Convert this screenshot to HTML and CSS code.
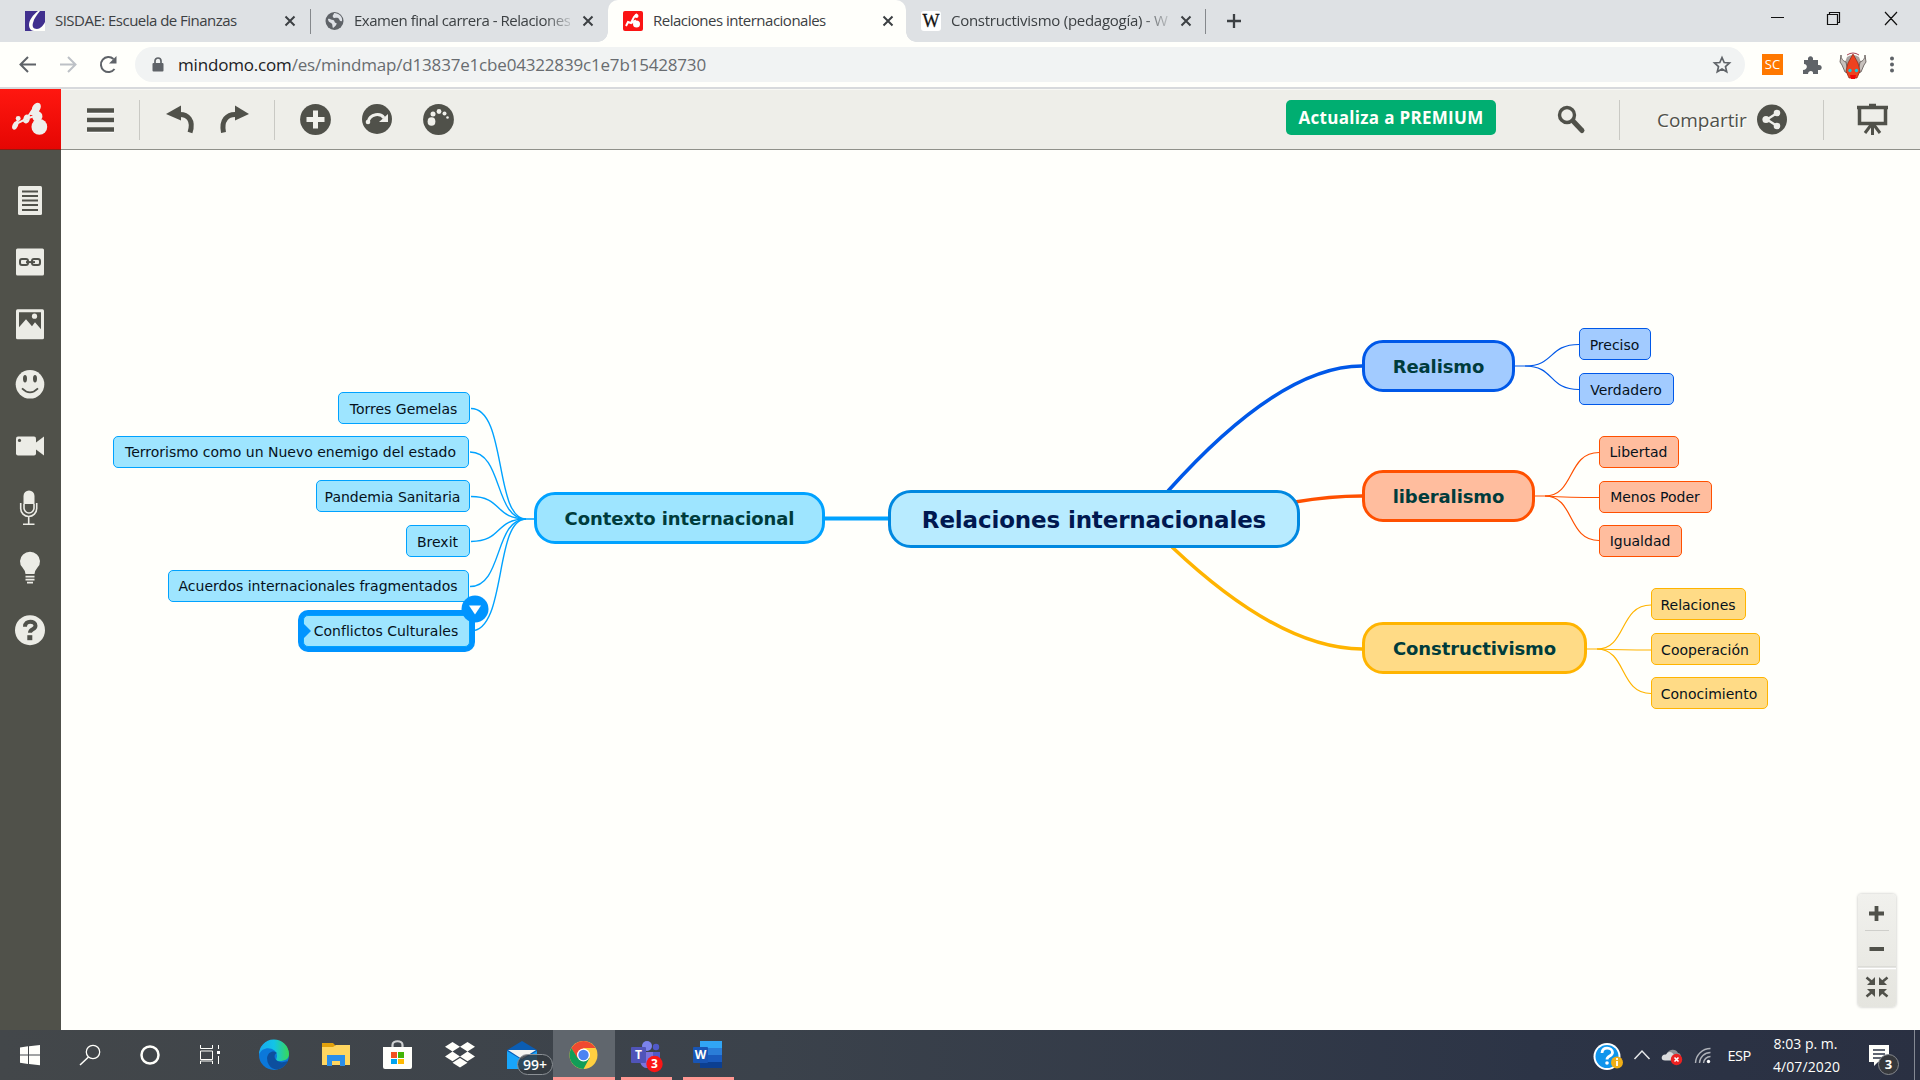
FILE: index.html
```html
<!DOCTYPE html>
<html lang="es">
<head>
<meta charset="utf-8">
<title>Relaciones internacionales</title>
<link rel="stylesheet" href="styles.css">
</head>
<body>
<header class="tabs">
  <div class="tab tab-1">
    <svg class="fav" viewBox="0 0 20 20"><rect width="20" height="20" fill="#41308f"/><path d="M13 0C8 4 4 9 4 14c0 3 2 6 5 6h11v-9c-2 4-5 7-8 7-4 0-5-3-4-6 1-5 4-8 7-12z" fill="#fffffb"/></svg>
    <span class="tab-title t1">SISDAE: Escuela de Finanzas</span>
    <svg class="x" viewBox="0 0 12 12"><path d="M1.5 1.5l9 9M10.500 1.5l-9 9"/></svg>
  </div>
  <div class="tab tab-2">
    <svg class="fav" viewBox="0 0 20 20"><circle cx="9.500" cy="10" r="9" fill="#5f6368"/><path d="M3 8c2-1 3 1 5 1s1 3 3 3-1 4-3 5c-1-2 0-4-2-5s-3-2-3-4zM9 2c0 2-2 2-1 4s3 0 5 1 1 4 4 3c1-4-3-8-8-8z" fill="#dee1e6"/></svg>
    <span class="tab-title t2 fade">Examen final carrera - Relaciones</span>
    <svg class="x" viewBox="0 0 12 12"><path d="M1.500 1.500l9 9M10.500 1.500l-9 9"/></svg>
  </div>
  <div class="tab tab-3 active">
    <svg class="fav" viewBox="0 0 20 20"><rect width="20" height="20" rx="2" fill="#fb1414"/><path d="M3 15l2-4 3 1 3-6 3-3M8 12l4-2 1 3" stroke="#fff" stroke-width="2" fill="none"/><circle cx="13.500" cy="13" r="3.500" fill="#fff"/><circle cx="13.500" cy="5" r="2" fill="#fff"/></svg>
    <span class="tab-title t3">Relaciones internacionales</span>
    <svg class="x" viewBox="0 0 12 12"><path d="M1.500 1.500l9 9M10.500 1.500l-9 9"/></svg>
  </div>
  <div class="tab tab-4">
    <span class="fav wiki">W</span>
    <span class="tab-title t4 fade">Constructivismo (pedagogía) - W</span>
    <svg class="x" viewBox="0 0 12 12"><path d="M1.500 1.500l9 9M10.500 1.500l-9 9"/></svg>
  </div>
  <svg class="newtab" viewBox="0 0 16 16"><path d="M8 1v14M1 8h14" stroke="#3c4043" stroke-width="2.300"/></svg>
  <svg class="winctl" viewBox="1760 0 160 42" fill="none" stroke="#111" stroke-width="1.200"><path d="M1771 17.500h13M1827.500 14.500h10v10h-10zM1829.500 14v-1.500h10v10h-2M1885 12l12 13M1897 12l-12 13"/></svg>
</header>

<nav class="address">
  <svg class="nav-icons" viewBox="0 42 135 45" fill="none" stroke="#5f6368" stroke-width="2"><path d="M36 64.500H21M28 57l-7.500 7.500 7.500 7.500"/><path d="M60 64.500h15M68 57l7.500 7.500-7.500 7.500" stroke="#bdc1c6"/><path d="M114.500 69A7.500 7.500 0 1 1 113.500 59"/><path d="M116.500 56v7.500h-7.500z" fill="#5f6368" stroke="none"/></svg>
  <div class="omni">
    <svg class="lock" viewBox="0 0 12 16"><path d="M3 6.500V4a3 3 0 0 1 6 0v2.500" fill="none" stroke="#5f6368" stroke-width="1.700"/><rect x=".5" y="6" width="11" height="8.500" rx="1" fill="#5f6368"/></svg>
    <span class="url"><b>mindomo.com</b>/es/mindmap/d13837e1cbe04322839c1e7b15428730</span>
    <svg class="star" viewBox="0 0 20 20"><path d="M10 2.500l2.200 5 5.300.5-4 3.600 1.200 5.200L10 14l-4.700 2.800 1.200-5.200-4-3.600 5.300-.5z" fill="none" stroke="#5f6368" stroke-width="1.700"/></svg>
  </div>
  <span class="sc">SC</span>
  <svg class="ext" viewBox="1795 42 125 45"><path d="M1804 60h4c-1-5 6-5 5 0h5v5c5-1 5 6 0 5v4h-5c1-4-5-4-5 0h-5v-4c5 0 5-6 1-6z" fill="#5f6368"/>
    <path d="M1847 57q6-4 12 0l3 8-3 9-6 5-6-5-3-9z" fill="#a9a29f"/><path d="M1841 55c0 4 2 6 5 7l2 11-3-1-3-7-2-3zM1865 55c0 4-2 6-5 7l-2 11 3-1 3-7 2-3z" fill="#c7c1bd" stroke="#59514e" stroke-width=".8"/><path d="M1853 54l5 9 2 8-3 7h-8l-3-7 2-8z" fill="#ee421f" stroke="#8a2718" stroke-width=".7"/><path d="M1847 55q6-4 12 0" fill="none" stroke="#a45" stroke-width="1"/><circle cx="1850" cy="70.500" r="1.700" fill="#16c7dc"/><circle cx="1856.500" cy="70.500" r="1.700" fill="#16c7dc"/><path d="M1850 75h6l-1 4h-4z" fill="#f00808"/>
    <g fill="#5f6368"><circle cx="1892" cy="58.500" r="2"/><circle cx="1892" cy="64.500" r="2"/><circle cx="1892" cy="70.500" r="2"/></g></svg>
</nav>

<section class="appbar">
  <svg class="logo" viewBox="0 89 61 61"><g fill="#efefec"><circle cx="39.500" cy="127.500" r="8"/><path d="M29 115l6-9 5 2-2 9z"/><ellipse cx="36.500" cy="108" rx="4" ry="5.500" transform="rotate(35 36.500 108)"/><ellipse cx="37.500" cy="117" rx="5" ry="5.500" transform="rotate(25 37.500 117)"/><ellipse cx="26.500" cy="119.500" rx="3.300" ry="4.500" transform="rotate(20 26.500 119.500)"/><ellipse cx="15" cy="126" rx="2.700" ry="4.500" transform="rotate(25 15 126)"/><circle cx="18" cy="119" r="2.500"/></g><path d="M15 125l4-6M17 124l10-5 9-3M28 117l6-9" stroke="#efefec" stroke-width="2"/></svg>
  <svg class="tools" viewBox="61 89 400 60">
    <path d="M87 111.500h27M87 121h27M87 130.500h27" stroke="#fff" stroke-width="4.600"/>
    <path d="M87 110.500h27M87 120h27M87 129.500h27" stroke="#50514a" stroke-width="4.600"/>
    <path d="M139.500 100v40M274.500 100v40" stroke="#c9c9c4"/>
    <path d="M178 114.500c10-1 16 6 12 18" fill="none" stroke="#50514a" stroke-width="5"/><path d="M166 114l15-8.500v15z" fill="#50514a"/>
    <path d="M237 114.500c-10-1-16 6-13.500 18" fill="none" stroke="#50514a" stroke-width="5"/><path d="M249 114l-14-8.500v15z" fill="#50514a"/>
    <circle cx="315.500" cy="119.500" r="15.400" fill="#50514a"/><path d="M315.500 110.500v18M306.500 119.500h18" stroke="#f0f0eb" stroke-width="5"/>
    <circle cx="377" cy="119" r="15" fill="#50514a"/><path d="M368 122c2-9 13-9 16-4" fill="none" stroke="#f0f0eb" stroke-width="3"/><path d="M388 114v8h-9z" fill="#f0f0eb"/><circle cx="368" cy="122" r="2.300" fill="#f0f0eb"/>
    <circle cx="438.500" cy="119.500" r="15.400" fill="#50514a"/><g fill="#f0f0eb"><ellipse cx="431.500" cy="121.500" rx="3.900" ry="4.300"/><circle cx="433" cy="114" r="2.500"/><circle cx="439" cy="111.500" r="2.400"/><circle cx="444.500" cy="113.500" r="2"/><circle cx="447.500" cy="117.500" r="1.300"/></g>
  </svg>
  <button class="premium"><span>Actualiza a PREMIUM</span></button>
  <svg class="search" viewBox="1530 89 100 60"><circle cx="1567" cy="115" r="7.500" fill="none" stroke="#50514a" stroke-width="3.400"/><path d="M1573 121l9 9.500" stroke="#50514a" stroke-width="5" stroke-linecap="round"/><path d="M1619.500 100v40" stroke="#c9c9c4"/></svg>
  <span class="share">Compartir</span>
  <svg class="right-tools" viewBox="1750 89 170 60"><circle cx="1772" cy="119.500" r="15" fill="#50514a"/><path d="M1777 113l-10 6.500 10 6.500" fill="none" stroke="#f0f0eb" stroke-width="2.300"/><g fill="#f0f0eb"><circle cx="1777" cy="113" r="3.300"/><circle cx="1766" cy="119.500" r="3.600"/><circle cx="1777" cy="126" r="3.300"/></g><path d="M1823.500 100v40" stroke="#c9c9c4"/><path d="M1857 107.500h31M1869 105.500h7" stroke="#50514a" stroke-width="3.500"/><path d="M1859.500 107v16.500h26V107" fill="none" stroke="#50514a" stroke-width="3.500"/><path d="M1872.500 124v11M1871 125l-6 8M1874 125l6 8" stroke="#50514a" stroke-width="3"/></svg>
</section>

<main class="work">
  <aside class="side">
    <svg viewBox="0 170 61 61.400"><rect x="18" y="186" width="24" height="29" rx="1.500"/><path d="M22 191.500h16M22 196h16M22 200.500h16M22 205h16M22 210h16" class="cut" stroke-width="2"/></svg>
    <svg viewBox="0 231.400 61 61.400"><rect x="16" y="249" width="28" height="27" rx="1.500"/><rect x="20" y="259.500" width="8" height="6" rx="2" class="cut" stroke-width="2"/><rect x="32" y="259.500" width="8" height="6" rx="2" class="cut" stroke-width="2"/><path d="M26 262.500h9" class="cut" stroke-width="2"/></svg>
    <svg viewBox="0 292.800 61 61.400"><rect x="16" y="309" width="28" height="30" rx="1.500"/><path d="M19 312h22v17l-6-7-3 4-6-7-7 8z" fill="#50514a"/><circle cx="34.500" cy="316" r="2.600"/></svg>
    <svg viewBox="0 354.200 61 61.400"><circle cx="30" cy="384.500" r="14.300"/><ellipse cx="25" cy="379" rx="2" ry="3.700" fill="#50514a"/><ellipse cx="35" cy="379" rx="2" ry="3.700" fill="#50514a"/><path d="M22 388.500q8 8 16 0" class="cut" stroke-width="1.700"/></svg>
    <svg viewBox="0 415.600 61 61.400"><rect x="16" y="436" width="20" height="19" rx="2"/><path d="M36 442l8-6v19l-8-6z"/><circle cx="19.500" cy="440" r="1.600" fill="#50514a"/></svg>
    <svg viewBox="0 477 61 61.400"><path d="M23.500 504v-8a5.500 5.500 0 0 1 11 0v8z"/><path d="M24 504v4a5 5 0 0 0 10 0v-4M20.700 503v5.500a8 8 0 0 0 16 0V503M28.700 517v6.500M23 524.300h11.500" fill="none" stroke="#ececE6" stroke-width="1.600"/></svg>
    <svg viewBox="0 538.400 61 61.400"><path d="M25.500 574.500q0-3-3-6.500A10 9.500 0 1 1 37.500 568q-3 3.500-3 6.500z"/><path d="M25.500 577h9M25.500 580h9M27 583h6" stroke="#ecece6" stroke-width="1.700"/></svg>
    <svg viewBox="0 599.800 61 61.400"><circle cx="30" cy="630" r="15"/><path d="M25 626.500c0-7 10.500-6 10.500-1 0 4-5.500 3-5.500 7" class="cut" stroke-width="4"/><rect x="27.300" y="635" width="5" height="5" fill="#50514a"/></svg>
  </aside>
  <div class="canvas">
    <svg class="links" viewBox="61 150 1859 880" fill="none">
      <g stroke="#00a2ff" stroke-width="1.400"><path d="M534 519h-8C494 519 507 408.500 471 408.500"/><path d="M526 519C494 519 503 452 470 452"/><path d="M526 519C494 519 503 496.500 471 496.500"/><path d="M526 519C494 519 503 541.500 471 541.500"/><path d="M526 519C494 519 503 586.500 470 586.500"/><path d="M526 519C494 519 507 631 471 631"/></g>
      <path d="M825 518.500h64" stroke="#00a2ff" stroke-width="4"/>
      <path d="M1168 491Q1280 366 1362 366" stroke="#0058e8" stroke-width="3.500"/>
      <path d="M1295 502Q1330 496 1362 496" stroke="#ff5000" stroke-width="3.500"/>
      <path d="M1172 547Q1280 649 1362 649" stroke="#ffb400" stroke-width="3.500"/>
      <g stroke="#0058e8" stroke-width="1.200"><path d="M1515 366h10C1555 366 1548 344.500 1579 344.500"/><path d="M1525 366C1555 366 1548 389.500 1579 389.500"/></g>
      <g stroke="#ff5000" stroke-width="1.200"><path d="M1535 496h10C1575 496 1567 452.500 1599 452.500"/><path d="M1545 496q25 1.500 54 1.500"/><path d="M1545 496C1575 496 1567 540.500 1599 540.500"/></g>
      <g stroke="#ffb400" stroke-width="1.200"><path d="M1587 649h10C1627 649 1619 605 1651 605"/><path d="M1597 649q25 1 54 1"/><path d="M1597 649C1627 649 1619 693.500 1651 693.500"/></g>
    </svg>
    <div class="node root">Relaciones internacionales</div>
    <div class="node topic cyan contexto">Contexto internacional</div>
    <div class="node leaf cyan torres">Torres Gemelas</div>
    <div class="node leaf cyan terrorismo">Terrorismo como un Nuevo enemigo del estado</div>
    <div class="node leaf cyan pandemia">Pandemia Sanitaria</div>
    <div class="node leaf cyan brexit">Brexit</div>
    <div class="node leaf cyan acuerdos">Acuerdos internacionales fragmentados</div>
    <div class="node leaf cyan conflictos">Conflictos Culturales</div>
    <svg class="handle" viewBox="0 0 28 28"><circle cx="14" cy="14" r="13.500" fill="#0094ff"/><path d="M8 10.500h12l-6 9z" fill="#fff"/></svg>
    <div class="node topic blue realismo">Realismo</div>
    <div class="node leaf blue preciso">Preciso</div>
    <div class="node leaf blue verdadero">Verdadero</div>
    <div class="node topic orange liberalismo">liberalismo</div>
    <div class="node leaf orange libertad">Libertad</div>
    <div class="node leaf orange menos">Menos Poder</div>
    <div class="node leaf orange igualdad">Igualdad</div>
    <div class="node topic yellow constructivismo">Constructivismo</div>
    <div class="node leaf yellow relaciones">Relaciones</div>
    <div class="node leaf yellow cooperacion">Cooperación</div>
    <div class="node leaf yellow conocimiento">Conocimiento</div>
    <svg class="zoom" viewBox="1858 894 38 113"><path d="M1876.500 906v15M1869 913.500h15M1869.500 949h14.500" stroke="#50514a" stroke-width="3.800"/><path d="M1865 930.500h24M1858 967h38" stroke="#cfcfcb"/><path d="M1858 968.500h38" stroke="#fff" stroke-width="1.500"/><g stroke="#50514a" stroke-width="2.500"><path d="M1866.500 977.500l6 5M1887.500 977.500l-6 5M1866.500 996.500l6-5M1887.500 996.500l-6-5"/></g><g fill="#50514a"><path d="M1875 977v8h-8zM1879 977v8h8zM1875 997v-8h-8zM1879 997v-8h8z"/></g></svg>
  </div>
</main>

<footer class="taskbar">
  <svg class="sys" viewBox="0 1030 243 50" fill="none" stroke="#fffffb"><path d="M20 1047.500l8-1.200v8.200h-8zM29 1046.200l11-1.200v9.500H29zM20 1055.500h8v8.500l-8-1.200zM29 1055.500h11v9.700l-11-1.200z" fill="#fffffb" stroke="none"/><circle cx="93" cy="1052" r="6.700" stroke-width="1.300"/><path d="M88.500 1057l-8.500 8" stroke-width="1.500"/><circle cx="150" cy="1055" r="8.500" stroke-width="2.500"/><path d="M200.500 1045v3.500h12V1045M200.500 1051h12v8.500h-12zM200.500 1064v-3h12v3M218.500 1045v4M218.500 1056v8"/><rect x="217" y="1051" width="3" height="3" fill="#fff" stroke="none"/></svg>
  <svg viewBox="243 1030 62 50"><defs><linearGradient id="edge" x1="0" x2="1"><stop offset="0" stop-color="#1aa9ed"/><stop offset=".5" stop-color="#12c4e8"/><stop offset="1" stop-color="#39d955"/></linearGradient></defs><circle cx="274" cy="1055" r="15" fill="#0b78da"/><path d="M259 1055a15 15 0 0 1 30-1c0 5-4 7-9 7-6 0-3-2-3-5 0-9-15-11-18-1z" fill="url(#edge)"/><path d="M267 1058c1-7 7-8 10-5-4 1-3 8 3 9 4 1 6-1 8-1-4 8-14 12-19 4q-2-3-2-7z" fill="#0d4f9e"/></svg>
  <svg viewBox="305 1030 62 50"><path d="M322 1043h11l3 3h14v19h-28z" fill="#e2a10c"/><path d="M322 1047h11l3-2h14v20h-28z" fill="#ffd660"/><path d="M327 1066v-11h18v11h-5v-5h-8v5z" fill="#2a8eea"/></svg>
  <svg viewBox="367 1030 62 50"><path d="M392.500 1047v-2c0-5 10-5 10 0v2" fill="none" stroke="#cfd1d2" stroke-width="2.200"/><path d="M383 1047h29v20q0 2-2 2h-25q-2 0-2-2z" fill="#fffffb"/><path d="M391 1052h6v6h-6z" fill="#f25022"/><path d="M398 1052h6v6h-6z" fill="#43b406"/><path d="M391 1059h6v5h-6z" fill="#00a4ef"/><path d="M398 1059h6v5h-6z" fill="#ffb900"/></svg>
  <svg viewBox="429 1030 62 50" fill="#fffffb"><path d="M452.500 1042l7.500 4.800-7.500 4.800-7.500-4.800zM467.500 1042l7.500 4.800-7.500 4.800-7.500-4.800zM452.500 1051.600l7.500 4.800-7.500 4.800-7.500-4.800zM467.500 1051.600l7.500 4.800-7.500 4.800-7.500-4.800zM460 1058l7.500 4.700-7.500 4.800-7.500-4.800z"/></svg>
  <div class="slot">
    <svg viewBox="491 1030 62 50"><path d="M507 1050l15-9 15 9v19h-30z" fill="#0b5db3"/><path d="M508 1050h28l-14 9z" fill="#f5f5f0"/><path d="M507 1051l15 9 15-9v18h-30z" fill="#18a5fa"/></svg>
    <span class="mail-badge">99+</span>
  </div>
  <div class="slot chrome">
    <svg viewBox="553 1030 62 50"><circle cx="583.500" cy="1055" r="14" fill="#ffcf40"/><path d="M571.400 1048a14 14 0 0 1 24.200 0h-12.100l-6 11z" fill="#f04a30"/><path d="M571.400 1048a14 14 0 0 0 12.100 21l6-11-12 0z" fill="#129d58"/><circle cx="583.500" cy="1055" r="6.500" fill="#fff"/><circle cx="583.500" cy="1055" r="5.200" fill="#4a84f3"/></svg>
  </div>
  <div class="slot run">
    <svg viewBox="615 1030 62 50"><circle cx="647" cy="1046" r="5" fill="#7b83eb"/><circle cx="656" cy="1047" r="3.200" fill="#5059c9"/><path d="M651 1052h9v8q-4 6-9 2z" fill="#5059c9"/><path d="M640 1052h13v10q-1 6-6 6t-7-6z" fill="#7b73dd"/><rect x="631" y="1047" width="15" height="16" rx="1" fill="#5054b8"/><circle cx="654.500" cy="1064" r="8.200" fill="#fb1616"/></svg>
    <span class="t-letter">T</span><span class="t-badge">3</span>
  </div>
  <div class="slot run">
    <svg viewBox="677 1030 62 50"><path d="M700 1041h22v7h-22z" fill="#31a5f4"/><path d="M700 1048h22v7h-22z" fill="#2a7dd8"/><path d="M700 1055h22v7h-22z" fill="#195abd"/><path d="M700 1062h22v6h-22z" fill="#0c3f91"/><rect x="693" y="1047" width="15" height="16" rx="1" fill="#1855b5"/></svg>
    <span class="w-letter">W</span>
  </div>
  <div class="tray">
    <svg class="tray-icons" viewBox="1590 1030 130 50"><circle cx="1607" cy="1056.500" r="13.500" fill="#fff"/><circle cx="1607" cy="1056.500" r="11.500" fill="#1095ec"/><path d="M1602 1053c0-7 10.500-6 10.500-.5 0 4-5.500 3-5.500 7" fill="none" stroke="#fff" stroke-width="2.800"/><circle cx="1607" cy="1063" r="1.800" fill="#fff"/><circle cx="1617" cy="1062.500" r="6" fill="#f0ae16"/><path d="M1617 1061v5M1617 1058v2" stroke="#fff" stroke-width="1.800"/><path d="M1634.500 1059l7.500-8 7.500 8" fill="none" stroke="#e6e8ea" stroke-width="1.500"/><path d="M1667 1054a6 6 0 0 1 11-1c4 0 4 8-1 8z" fill="#8d9095"/><path d="M1665 1060.500c-5 0-4-7 1-6 2-4 7-3 8 1l2 5z" fill="#dadbdd"/><circle cx="1676.500" cy="1059.500" r="5.700" fill="#ec2222"/><path d="M1674.500 1057.500l4 4M1678.500 1057.500l-4 4" stroke="#fff" stroke-width="1.600"/><g fill="none" stroke="#aeb1b8" stroke-width="1.400"><path d="M1695.500 1063a15 15 0 0 1 15-14.500M1699.500 1063a11 11 0 0 1 11-10.500M1703.500 1063a7 7 0 0 1 7-6.500"/></g><circle cx="1708.500" cy="1061.500" r="1.700" fill="#fff"/></svg>
    <span class="lang">ESP</span>
    <div class="clock"><span>8:03 p. m.</span><span class="date">4/07/2020</span></div>
    <div class="notify">
      <svg viewBox="1855 1030 65 50"><path d="M1869 1045h20v17h-11l-4 4v-4h-5z" fill="#fffffb"/><path d="M1873 1050h12M1873 1054h12M1873 1058h9" stroke="#2d3445" stroke-width="1.300"/><circle cx="1888.500" cy="1064.500" r="10" fill="#36383c" stroke="#85888d"/><path d="M1914.500 1030v50" stroke="#858993"/></svg>
      <span class="n-badge">3</span>
    </div>
  </div>
</footer>
</body>
</html>
```
FILE: styles.css
```css
* { box-sizing: border-box; }
body {
  margin: 0;
  width: 1920px;
  height: 1080px;
  overflow: hidden;
  display: flex;
  flex-direction: column;
  background: #fffffb;
  font-family: "Open Sans", "Noto Sans", sans-serif;
}
svg { display: block; flex: none; }

/* browser tabs */
.tabs { height: 42px; display: flex; background: #dee1e4; flex: none; }
.tab { position: relative; display: flex; align-items: center; height: 42px; }
.tab-1 { width: 310px; padding-left: 25px; }
.tab-2 { width: 298px; padding-left: 15px; }
.tab-3 { width: 298px; padding-left: 15px; }
.tab-4 { width: 299px; padding-left: 15px; }
.tab-1::after, .tab-4::after {
  content: "";
  position: absolute;
  right: -1px;
  top: 9px;
  width: 1px;
  height: 25px;
  background: #85888c;
}
.active { background: #fffffb; border-radius: 10px 10px 0 0; }
.active::before, .active::after {
  content: "";
  position: absolute;
  bottom: 0;
  width: 10px;
  height: 10px;
}
.active::before { left: -10px; background: radial-gradient(circle at 0 0, transparent 9.5px, #fffffb 10px); }
.active::after { right: -10px; background: radial-gradient(circle at 100% 0, transparent 9.5px, #fffffb 10px); }
.fav { width: 20px; height: 20px; flex: none; }
.wiki {
  background: #fff;
  border-radius: 3px;
  font: 18px/20px "Liberation Serif", serif;
  text-align: center;
  color: #111;
  -webkit-text-stroke: .3px #111;
}
.tab-title {
  margin-left: 10px;
  padding-bottom: 2px;
  white-space: nowrap;
  font-size: 15px;
  line-height: 22px;
  color: #3c4043;
}
.t1 { letter-spacing: -.52px; }
.t2 { letter-spacing: -.47px; margin-left: 9px; }
.t3 { letter-spacing: -.5px; }
.t4 { letter-spacing: -.27px; }
.fade { -webkit-mask-image: linear-gradient(90deg, #000 88%, rgba(0, 0, 0, .2)); mask-image: linear-gradient(90deg, #000 88%, rgba(0, 0, 0, .2)); }
.x { width: 12px; height: 12px; margin-left: auto; stroke: #3c4043; stroke-width: 2; }
.tab-1 .x { margin-right: 14px; }
.tab-2 .x { margin-right: 14px; }
.tab-3 .x { margin-right: 12px; }
.tab-4 .x { margin-right: 13px; }
.newtab { width: 16px; height: 16px; margin: 13px 0 0 21px; }
.winctl { width: 160px; height: 42px; margin-left: auto; }

/* address bar */
.address { height: 47px; display: flex; flex: none; box-shadow: inset 0 -2px #d7d9dc; }
.nav-icons { width: 135px; height: 45px; }
.omni {
  width: 1610px;
  height: 35px;
  margin-top: 5px;
  border-radius: 18px;
  background: #f1f3f3;
  display: flex;
  align-items: center;
}
.lock { width: 12px; height: 16px; margin-left: 17px; }
.url { margin-left: 14px; font-size: 17px; color: #686c70; letter-spacing: -.18px; white-space: nowrap; }
.url b { font-weight: 400; color: #202124; }
.star { width: 20px; height: 20px; margin-left: auto; margin-right: 13px; }
.sc {
  width: 21px;
  height: 21px;
  margin: 12px 12px 0 17px;
  background: #ff7800;
  color: #fff;
  font-size: 13px;
  line-height: 21px;
  text-align: center;
}
.ext { width: 125px; height: 45px; }

/* application toolbar */
.appbar { height: 61px; flex: none; display: flex; background: #eeeee9; border-top: 1px solid #f8f8f4; border-bottom: 1px solid #8f908a; }
.logo { width: 61px; height: 61px; margin-top: -1px; background: linear-gradient(#ff1710, #e50603); border-bottom: 1px solid #8e1b12; }
.tools { width: 400px; height: 60px; margin-top: -1px; }
.premium {
  width: 210px;
  height: 35px;
  margin: 10px 34px 0 825px;
  padding: 0;
  border: 0;
  border-radius: 5px;
  background: #00ae71;
  color: #fffffb;
  font: 700 17px/35px "Open Sans", sans-serif;
  letter-spacing: .3px;
  white-space: nowrap;
}
.search { width: 100px; height: 60px; margin-top: -1px; }
.share { width: 120px; padding-left: 27px; font-size: 19px; line-height: 61px; color: #50514a; letter-spacing: -.05px; text-shadow: 1px 1px #fff; }
.right-tools { width: 170px; height: 60px; margin-top: -1px; }

/* workspace */
.work { height: 880px; flex: none; display: flex; }
.side { width: 61px; background: #50514a; padding-top: 20px; flex: none; }
.side svg { width: 61px; height: 61.4px; fill: #ecece6; }
.side .cut { fill: none; stroke: #50514a; }
.canvas { position: relative; width: 1859px; }
.links { width: 1859px; height: 880px; }

/* map nodes */
.node {
  position: absolute;
  white-space: nowrap;
  text-align: center;
  font-family: "DejaVu Sans", sans-serif;
}
.leaf { height: 32px; border: 1px solid; border-radius: 5px; font-size: 14px; line-height: 32px; padding-right: 1px; }
.topic { height: 52px; border: 3px solid; border-radius: 21px; font-size: 18px; font-weight: 700; line-height: 48px; letter-spacing: -.1px; }
.node.topic { color: #003c3c; }
.node.leaf { color: #06121c; }
.cyan { background: #9ee5ff; border-color: #00a2ff; }
.blue { background: #a2cbff; border-color: #0058e8; }
.orange { background: #ffbd9e; border-color: #ff5000; }
.yellow { background: #ffdb86; border-color: #ffb400; }
.root {
  left: 827px; top: 340px; width: 412px; height: 58px;
  border: 3px solid #0088e0;
  border-radius: 23px;
  background: #b8ebff;
  color: #001850;
  font-size: 23px;
  font-weight: 700;
  line-height: 54px;
  letter-spacing: -.15px;
}
.contexto { left: 473px; top: 342px; width: 291px; }
.torres { left: 277px; top: 242px; width: 132px; }
.terrorismo { left: 52px; top: 286px; width: 356px; }
.pandemia { left: 255px; top: 330px; width: 154px; }
.brexit { left: 345px; top: 375px; width: 64px; }
.acuerdos { left: 107px; top: 420px; width: 301px; }
.conflictos { left: 242px; top: 465px; width: 167px; box-shadow: 0 0 0 5px #0094ff; }
.conflictos::before {
  content: "";
  position: absolute;
  left: -1px;
  top: 7px;
  border: 8px solid transparent;
  border-left-color: #0094ff;
  border-right: 0;
}
.terrorismo, .acuerdos, .conflictos, .libertad, .menos, .igualdad { line-height: 30px; }
.handle { position: absolute; left: 400px; top: 445px; width: 28px; height: 28px; }
.realismo { left: 1301px; top: 190px; width: 153px; }
.preciso { left: 1518px; top: 178px; width: 72px; }
.verdadero { left: 1518px; top: 223px; width: 95px; }
.liberalismo { left: 1301px; top: 320px; width: 173px; }
.libertad { left: 1538px; top: 286px; width: 80px; }
.menos { left: 1538px; top: 331px; width: 113px; }
.igualdad { left: 1538px; top: 375px; width: 83px; }
.constructivismo { left: 1301px; top: 472px; width: 225px; }
.relaciones { left: 1590px; top: 438px; width: 95px; }
.cooperacion { left: 1590px; top: 483px; width: 109px; }
.conocimiento { left: 1590px; top: 527px; width: 117px; }
.zoom {
  position: absolute;
  left: 1797px;
  top: 744px;
  width: 38px;
  height: 113px;
  border-radius: 4px;
  background: linear-gradient(#f1f1ed, #e5e5df);
  box-shadow: 0 0 3px #bbb;
}

/* taskbar */
.taskbar { height: 50px; flex: none; display: flex; background: linear-gradient(90deg, #43474a, #3b424b 40%, #2c3446 80%, #2a3042); color: #fffffb; }
.taskbar > svg, .slot { width: 62px; height: 50px; flex: none; }
.taskbar > .sys { width: 243px; }
.slot { position: relative; }
.slot svg { width: 62px; height: 50px; }
.chrome { background: #60666d; box-shadow: inset 0 -3px #ff9893; }
.run { background: linear-gradient(#ff9893, #ff9893) 6px 47px / 51px 3px no-repeat; }
.mail-badge {
  position: absolute;
  left: 26px;
  top: 24px;
  width: 36px;
  height: 21px;
  border: 1px solid #8b9095;
  border-radius: 11px;
  background: rgba(50, 56, 62, .85);
  font: 600 14px/19px "Open Sans", sans-serif;
  text-align: center;
}
.t-letter, .w-letter, .t-badge, .n-badge { position: absolute; font-weight: 700; font-size: 12px; line-height: 16px; text-align: center; }
.t-letter, .w-letter { left: 16px; top: 17px; width: 15px; }
.t-badge { left: 32px; top: 26px; width: 15px; }
.n-badge { left: 26px; top: 26px; width: 15px; font-size: 13px; }
.tray { margin-left: auto; display: flex; }
.tray-icons { width: 130px; height: 50px; }
.lang { width: 38px; text-align: center; font-size: 14.5px; line-height: 51px; letter-spacing: -.5px; }
.clock { width: 97px; display: flex; flex-direction: column; align-items: center; font-size: 14px; line-height: 23px; padding-top: 2px; padding-right: 2px; }
.date { letter-spacing: .1px; padding-left: 2px; }
.notify { position: relative; width: 65px; }
.notify svg { width: 65px; height: 50px; }
```
